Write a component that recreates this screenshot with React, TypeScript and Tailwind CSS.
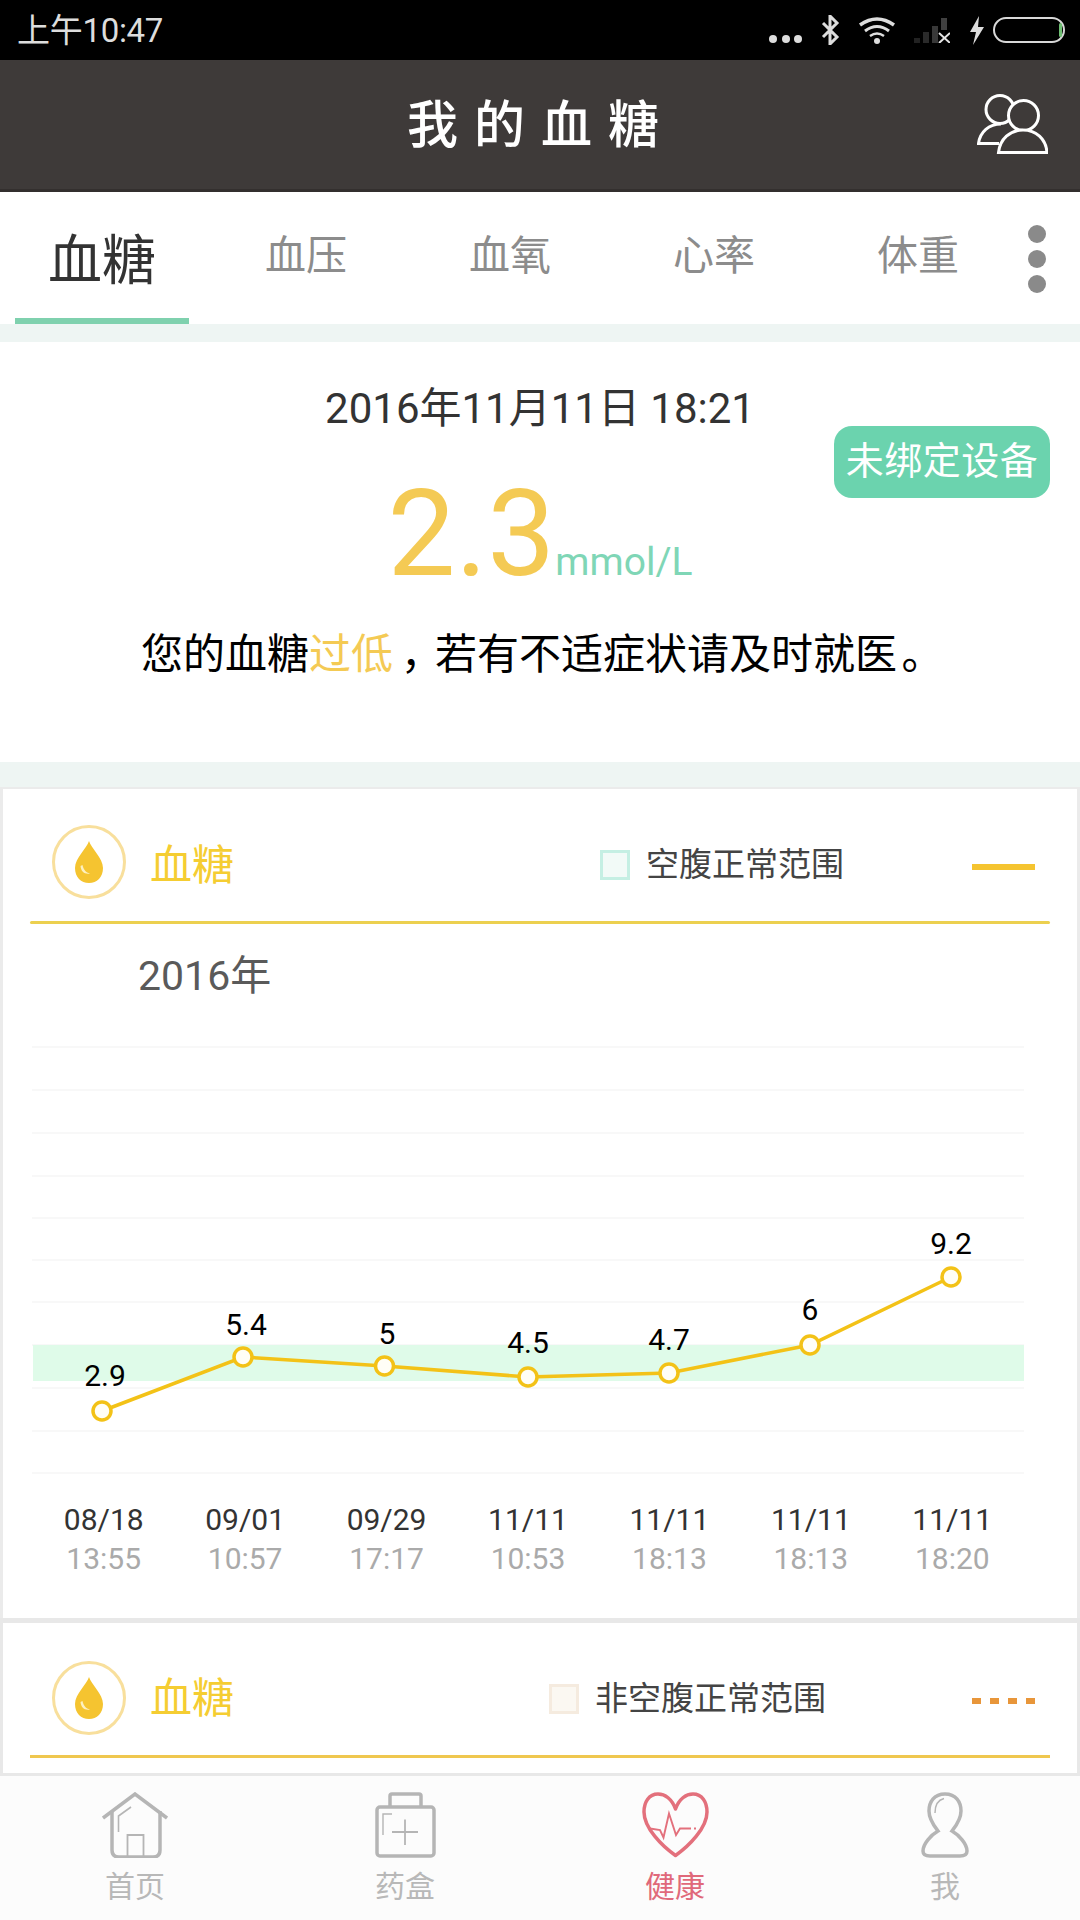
import React from "react";

const points: [number, number, string, number, number][] = [
  [102, 1411, "2.9", 105, 1376],
  [243, 1357, "5.4", 246, 1325],
  [384.5, 1366, "5", 387, 1334],
  [528, 1377, "4.5", 528, 1343],
  [669, 1373, "4.7", 669, 1340],
  [810, 1345, "6", 810, 1310],
  [951, 1277, "9.2", 951, 1244],
];
const grid = [1047, 1090, 1133, 1176, 1218, 1260, 1302, 1345, 1388, 1431, 1473];
const dates = [
  ["08/18", "13:55"],
  ["09/01", "10:57"],
  ["09/29", "17:17"],
  ["11/11", "10:53"],
  ["11/11", "18:13"],
  ["11/11", "18:13"],
  ["11/11", "18:20"],
];

function DropCircle() {
  return (
    <div className="w-[74px] h-[74px] rounded-full border-[3px] border-[#f8df9c] flex items-center justify-center shrink-0">
      <svg width="28" height="42" viewBox="0 0 28 42">
        <path d="M14 0C12 7 0 17 0 27C0 36 6 42 14 42C22 42 28 36 28 27C28 17 16 7 14 0Z" fill="#f5c430" />
        <path d="M5.5 25C6 31 10 33.5 15 32.5C11 31.5 8.5 29 7.5 24Z" fill="#fdf0c0" />
      </svg>
    </div>
  );
}

function CardHead({ children, height, textMargin }: { children: React.ReactNode; height: string; textMargin: string }) {
  return (
    <div className={`flex items-center ml-[49px] ${height}`}>
      <DropCircle />
      <span className={`ml-[24px] text-[42px] leading-[50px] text-[#f5cd32] ${textMargin}`}>血糖</span>
      {children}
    </div>
  );
}

function NavItem({ label, active, children }: { label: string; active?: boolean; children: React.ReactNode }) {
  return (
    <div className="flex flex-col items-center pt-[16px]">
      <div className="h-[66px] flex items-start">{children}</div>
      <span className={`mt-[12px] text-[30px] leading-[34px] ${active ? "text-[#e0697a]" : "text-[#b8b8b8]"}`}>{label}</span>
    </div>
  );
}

export default function App() {
  return (
    <div className="w-[1080px] h-[1920px] overflow-hidden flex flex-col bg-[#eef5f3] font-['Roboto','Noto_Sans_CJK_SC',sans-serif]">
      {/* status bar */}
      <div className="h-[60px] bg-black flex items-start pl-[17px] pr-[15px] shrink-0">
        <span className="mt-[11px] text-[33px] leading-[40px] text-[#dddddd] tracking-[-0.3px]">上午10:47</span>
        <div className="ml-auto flex items-start">
          <svg className="mt-[34px]" width="33" height="10" viewBox="0 0 33 10">
            <circle cx="4" cy="5" r="4" fill="#dddddd" />
            <circle cx="17" cy="5" r="4" fill="#dddddd" />
            <circle cx="29" cy="5" r="4" fill="#dddddd" />
          </svg>
          <svg className="mt-[15px] ml-[18px]" width="20" height="30" viewBox="0 0 20 30">
            <path d="M3 8L17 22L10 29V1L17 8L3 22" fill="none" stroke="#dddddd" strokeWidth="3" />
          </svg>
          <svg className="mt-[16px] ml-[18px]" width="38" height="28" viewBox="0 0 38 28">
            <path d="M2 9Q19-3 36 9" fill="none" stroke="#dddddd" strokeWidth="3.5" />
            <path d="M7 15Q19 6 31 15" fill="none" stroke="#dddddd" strokeWidth="3" />
            <path d="M12 20Q19 15 26 20" fill="none" stroke="#dddddd" strokeWidth="2.5" />
            <circle cx="19" cy="25" r="3" fill="#dddddd" />
          </svg>
          <svg className="mt-[18px] ml-[17px]" width="37" height="25" viewBox="0 0 37 25">
            <rect x="1" y="20" width="6" height="5" fill="#222222" />
            <rect x="10" y="14" width="6" height="11" fill="#2a2a2a" />
            <rect x="19" y="8" width="6" height="17" fill="#383838" />
            <rect x="28" y="0" width="6" height="12" fill="#404040" />
            <path d="M26 15L37 25M37 15L26 25" stroke="#e5e5e5" strokeWidth="2" />
          </svg>
          <svg className="mt-[16px] ml-[19px]" width="16" height="29" viewBox="0 0 16 29">
            <path d="M10 0L1 16H7L4 29L15 11H9Z" fill="#dddddd" />
          </svg>
          <div className="mt-[17px] ml-[8px] w-[72px] h-[26px] rounded-[13px] border-2 border-[#d8d8d8] flex items-center justify-end pr-[1px]">
            <div className="w-[3px] h-[14px] rounded-full bg-[#6fbf73]" />
          </div>
        </div>
      </div>

      {/* title bar */}
      <div className="h-[132px] bg-[#3e3a39] border-b-[3px] border-[#332f2e] relative flex items-center justify-center pt-[2px] shrink-0">
        <span className="ml-[2px] text-[51px] leading-[60px] tracking-[16px] font-medium text-white">我的血糖</span>
        <svg className="absolute right-[32px] top-[34px]" width="71" height="60" viewBox="0 0 71 60">
          <g fill="none" stroke="#ffffff" strokeWidth="3">
            <circle cx="23" cy="15.5" r="14" />
            <path d="M24 30C12 30 3 38 1.5 49.5H22" />
            <circle cx="46.5" cy="21.5" r="15" fill="#3e3a39" />
            <path d="M21.5 58.5H70C69 45 59 36 46 36C33 36 23 45 21.5 58.5Z" fill="#3e3a39" />
          </g>
        </svg>
      </div>

      {/* tabs */}
      <div className="h-[132px] bg-white flex shrink-0">
        <div className="relative w-[204px] flex items-center justify-center pt-[8px]">
          <span className="text-[54px] leading-[60px] text-[#333333]">血糖</span>
          <div className="absolute left-[15px] right-[15px] bottom-0 h-[6px] bg-[#7fd1ae]" />
        </div>
        {["血压", "血氧", "心率", "体重"].map((t) => (
          <div key={t} className="w-[204px] flex items-center justify-center pb-[4px]">
            <span className="text-[41px] leading-[50px] text-[#8c8c8c]">{t}</span>
          </div>
        ))}
        <div className="ml-[8px] pt-[2px] flex flex-col justify-center gap-[7px]">
          <div className="w-[18px] h-[18px] rounded-full bg-[#8a8a8a]" />
          <div className="w-[18px] h-[18px] rounded-full bg-[#8a8a8a]" />
          <div className="w-[18px] h-[18px] rounded-full bg-[#8a8a8a]" />
        </div>
      </div>

      {/* summary */}
      <div className="mt-[18px] h-[420px] bg-white relative flex flex-col items-center shrink-0 pt-[42px]">
        <div className="text-[42px] leading-[50px] text-[#333333]">2016年11月11日 18:21</div>
        <div className="mt-[40px] flex items-baseline justify-center">
          <span className="text-[121px] leading-[120px] text-[#f4ca54]">2.3</span>
          <span className="text-[39px] leading-[50px] text-[#7fd6b6]">mmol/L</span>
        </div>
        <div className="mt-[36px] text-[42px] leading-[50px] text-black">
          您的血糖<span className="text-[#f4ca54]">过低</span>
          <span className="inline-block w-[42px] text-center [font-feature-settings:'palt']">，</span>若有不适症状请及时就医
          <span className="inline-block w-[42px] pl-[4px] text-left [font-feature-settings:'palt']">。</span>
        </div>
        <div className="absolute right-[30px] top-[84px] w-[216px] h-[72px] pb-[2px] rounded-[18px] bg-[#6bd3ae] flex items-center justify-center text-[38px] leading-[46px] tracking-[0.5px] text-white">
          未绑定设备
        </div>
      </div>

      {/* card 1 */}
      <div className="mt-[25px] h-[831px] bg-white border-x-[3px] border-t-[2px] border-[#ebebeb] shrink-0">
        <CardHead height="h-[132px] pt-[13px]" textMargin="mt-[8px]">
          <div className="ml-[366px] mt-[6px] w-[30px] h-[30px] border-[3px] border-[#c5efe3] bg-[#f2faf7]" />
          <span className="ml-[16px] mt-[6px] text-[33px] leading-[40px] text-[#444444]">空腹正常范围</span>
          <div className="ml-[128px] mt-[10px] w-[63px] h-[6px] bg-[#f5c430]" />
        </CardHead>
        <div className="mx-[27px] h-[3px] rounded-full bg-[#ecd04f]" />
        <div className="mt-[28px] pl-[135px] text-[41px] leading-[48px] text-[#5a5a5a]">2016年</div>
        <svg className="block" width="1074" height="490" viewBox="3 1000 1074 490">
          {grid.map((y) => (
            <line key={y} x1="32" x2="1024" y1={y} y2={y} stroke="#f8f8f8" strokeWidth="2" />
          ))}
          <rect x="33" y="1345" width="991" height="36" fill="#dffbe9" />
          <polyline points={points.map((p) => `${p[0]},${p[1]}`).join(" ")} fill="none" stroke="#f3c217" strokeWidth="3.5" />
          {points.map((p) => (
            <circle key={p[0]} cx={p[0]} cy={p[1]} r="9" fill="#fffef6" stroke="#f3c217" strokeWidth="3.5" />
          ))}
          {points.map((p) => (
            <text key={p[3]} x={p[3]} y={p[4] + 10} textAnchor="middle" fontSize="30" fill="#000000">
              {p[2]}
            </text>
          ))}
        </svg>
        <div className="mt-[10px] ml-[30px] grid grid-cols-7 w-[990px]">
          {dates.map((d, i) => (
            <div key={i} className="flex flex-col items-center">
              <span className="text-[30px] leading-[40px] text-[#333333]">{d[0]}</span>
              <span className="text-[30px] leading-[38px] text-[#aaaaaa]">{d[1]}</span>
            </div>
          ))}
        </div>
      </div>

      {/* card 2 */}
      <div className="h-[158px] bg-white border-x-[3px] border-t-[5px] border-b-[3px] border-[#e8e8e8] shrink-0">
        <CardHead height="h-[132px] pt-[17px]" textMargin="mt-[2px]">
          <div className="ml-[315px] mt-[2px] w-[30px] h-[30px] border-[3px] border-[#f5ebdf] bg-[#fbf8f2]" />
          <span className="ml-[16px] mt-[2px] text-[33px] leading-[40px] text-[#444444]">非空腹正常范围</span>
          <div className="ml-[146px] mt-[6px] flex gap-[9px]">
            <div className="w-[9px] h-[6px] bg-[#e8963a]" />
            <div className="w-[9px] h-[6px] bg-[#e8963a]" />
            <div className="w-[9px] h-[6px] bg-[#e8963a]" />
            <div className="w-[9px] h-[6px] bg-[#e8963a]" />
          </div>
        </CardHead>
        <div className="mx-[27px] h-[3px] bg-[#efc74f]" />
      </div>

      {/* bottom nav */}
      <div className="flex-1 bg-[#fcfcfc] grid grid-cols-4">
        <NavItem label="首页">
          <svg width="66" height="66" viewBox="0 0 66 66" fill="none" stroke="#b5b5b5">
            <path d="M1 26L33 2L65 26" strokeWidth="3.5" />
            <path d="M10 19V58Q10 65 17 65H51Q58 65 58 58V19" strokeWidth="3.5" />
            <path d="M25.5 65V43H41.5V65" strokeWidth="1.8" />
            <path d="M16.5 40V24L29 15" strokeWidth="1.6" />
          </svg>
        </NavItem>
        <NavItem label="药盒">
          <svg width="61" height="66" viewBox="0 0 61 66" fill="none" stroke="#b5b5b5">
            <path d="M15 15V4Q15 2 17 2H44Q46 2 46 4V15" strokeWidth="3.5" />
            <rect x="2" y="15" width="57" height="49" rx="3" strokeWidth="3.5" />
            <path d="M17 40H43M30 27.5V53" strokeWidth="1.8" />
            <path d="M8 43V22H17" strokeWidth="1.4" />
          </svg>
        </NavItem>
        <NavItem label="健康" active>
          <svg width="67" height="66" viewBox="0 0 67 66" fill="none" stroke="#e3707c">
            <path d="M33.5 17C30 7 23 2 16 2C7 2 2 10 2 20C2 36 20 54 33.5 63.5C47 54 65 36 65 20C65 10 60 2 51 2C44 2 37 7 33.5 17Z" strokeWidth="3.5" strokeLinejoin="round" />
            <path d="M8 36.5L18 38L21.5 45.5L27 21.5L34 43L38 36.5H49" strokeWidth="1.9" />
            <path d="M52 36.5H56" strokeWidth="1.9" strokeDasharray="2 2" />
          </svg>
        </NavItem>
        <NavItem label="我">
          <svg width="48" height="66" viewBox="0 0 48 66" fill="none" stroke="#b5b5b5">
            <path d="M24 2C13 2 8 10 8 19C8 28 14 35 17 39C10 43 2 52 2 59C2 63 5 64 9 64H39C43 64 46 63 46 59C46 52 38 43 31 39C34 35 40 28 40 19C40 10 35 2 24 2Z" strokeWidth="3.5" />
            <path d="M14 21C14 13 17 8 23 6.5" strokeWidth="1.5" />
          </svg>
        </NavItem>
      </div>
    </div>
  );
}
